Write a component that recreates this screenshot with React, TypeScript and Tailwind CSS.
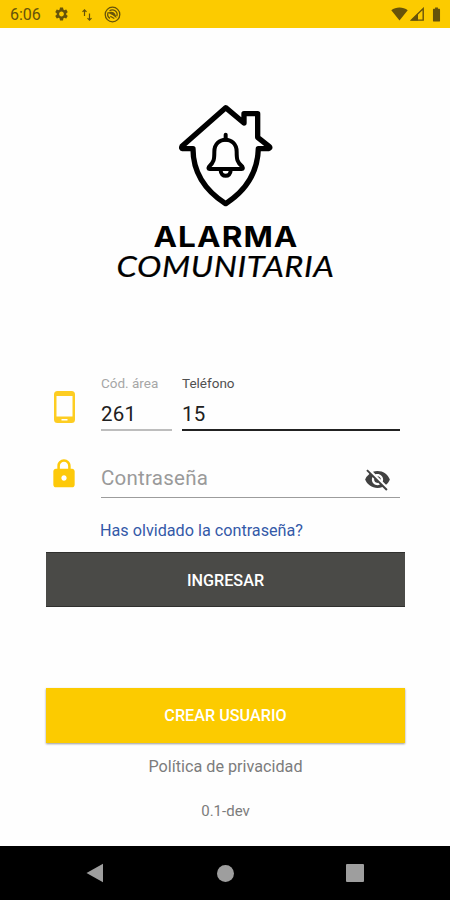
import React from 'react';
import { MdBatteryFull, MdLock, MdSettings, MdVisibilityOff } from 'react-icons/md';

const StatusBar: React.FC = () => (
  <header className="flex h-7 items-center bg-[#fccb00] pl-[10px] pr-[5px] text-[#66530a]">
    <span className="w-[43px] pt-0.5 text-[16px] leading-none">6:06</span>
    <MdSettings className="h-4 w-[17px]" />
    {/* data arrows */}
    <svg className="ml-[11px] mt-0.5 h-[14px] w-3" viewBox="0 0 12 14" fill="none" stroke="currentColor" strokeWidth="1.2">
      <path d="M3.500 8V2M1.500 3.800L3.500 1.800l2 2M8.500 5.500v6.500M6.500 10.200l2 2 2-2" />
    </svg>
    <svg className="ml-[11px] h-[17px] w-[17px]" viewBox="0 0 17 17" fill="none" stroke="currentColor" strokeWidth="1.3">
      <circle cx="8.500" cy="8.500" r="7.300" />
      <path d="M6 12.400A4.700 4.700 0 0 1 4.300 6.300M5.500 4.900a4.700 4.700 0 0 1 7.300 5.300" />
      <path d="M5.300 6.800c3-1.300 5.200.2 6.200 3.700L8.500 8.300z" fill="currentColor" />
      <path d="M6.300 10.300l4 2.200" />
    </svg>
    <div className="ml-auto flex items-center">
      <svg className="h-[14px] w-[17px]" viewBox="0 0 17 14" fill="currentColor">
        <path d="M.3 3.300C4.700-.5 12.300-.5 16.700 3.300L8.500 13.500z" />
      </svg>
      <svg className="ml-[2px] h-[14px] w-[14px]" viewBox="0 0 14 14" fill="none" stroke="currentColor" strokeWidth="1.400">
        <path d="M1.500 13.100L13.200 1.600v11.500z" />
        <path d="M1 13.500L8 6.600v6.900z" fill="currentColor" stroke="none" />
      </svg>
      <MdBatteryFull className="ml-[4px] h-[17px] w-[17px]" />
    </div>
  </header>
);

const Logo: React.FC = () => (
  <div className="flex flex-col items-center text-black">
    <svg
      className="h-[120px] w-[120px]"
      viewBox="0 0 360 360"
      fill="none"
      stroke="currentColor"
      strokeWidth="16"
      strokeLinejoin="round"
      strokeLinecap="round"
    >
      <path d="M182 38L51 154Q48 160 53 161H84C84 229 120 286 182 326C244 286 278 229 280 161H310Q317 159 313 155L278 127V56H237V84Z" />
      <g strokeWidth="12">
        <path d="M182 119V134" />
        <path d="M148 170C148 122 215 122 215 170C215 193 216 202 232 215Q236 222 230 222H134Q128 222 132 215C147 202 148 193 148 170Z" />
        <path d="M167 226C167 248 197 248 197 226" />
      </g>
    </svg>
    <svg className="h-[75px] w-[240px]" viewBox="0 0 240 75" fill="currentColor">
      <text
        x="48.500"
        y="31.500"
        fontFamily="Inter, sans-serif"
        fontSize="29"
        fontWeight="700"
        letterSpacing="1"
        textLength="145"
        lengthAdjust="spacingAndGlyphs"
      >
        ALARMA
      </text>
      <text
        x="11.500"
        y="62"
        fontFamily="Lato, sans-serif"
        fontSize="28"
        fontStyle="italic"
        letterSpacing="0.5"
        stroke="currentColor"
        strokeWidth="0.2"
        textLength="218"
        lengthAdjust="spacingAndGlyphs"
      >
        COMUNITARIA
      </text>
    </svg>
  </div>
);

const LoginForm: React.FC = () => (
  <form className="mt-[85px] flex flex-col">
    <div className="flex h-14 px-[46px]">
      <svg className="ml-2 mt-4 h-8 w-[21px]" viewBox="0 0 21 32">
        <path
          fill="#fdcd22"
          fillRule="evenodd"
          d="M3.500 0h14A3.500 3.500 0 0 1 21 3.500v25a3.500 3.500 0 0 1-3.500 3.500h-14A3.500 3.500 0 0 1 0 28.500v-25A3.500 3.500 0 0 1 3.500 0zM2.500 5v20.500h16V5zM7.500 28v1.500h6v-1.500z"
        />
      </svg>
      <label className="ml-[26px] flex w-[71px] flex-col border-b-2 border-[#bdbdbd] text-[13.500px] leading-4 text-[#a6a6a6]">
        Cód. área
        <input
          className="mt-[10px] w-full bg-transparent p-0 text-[20.500px] leading-[26px] tracking-[0.2px] text-[#202020] outline-none"
          defaultValue="261"
        />
      </label>
      <label className="ml-[10px] flex w-[218px] flex-col border-b-2 border-[#222222] text-[13.500px] leading-4 text-[#505050]">
        Teléfono
        <input
          className="mt-[10px] w-full bg-transparent p-0 text-[20.500px] leading-[26px] tracking-[0.2px] text-[#202020] outline-none"
          defaultValue="15"
        />
      </label>
    </div>

    <div className="mt-[27px] flex h-10 pl-[48px] pr-[50px]">
      <MdLock className="h-8 w-8 shrink-0 text-[#fdc90a]" />
      <div className="ml-[21px] flex min-w-0 flex-1 items-center border-b border-[#9c9c9c]">
        <input
          className="min-w-0 flex-1 bg-transparent p-0 pt-px text-[20.500px] leading-[26px] tracking-[0.25px] outline-none placeholder:text-[#9a9a9a]"
          placeholder="Contraseña"
        />
        <MdVisibilityOff className="mr-[9px] mt-[3px] h-[27px] w-[27px] shrink-0 text-[#414141]" />
      </div>
    </div>

    <a className="ml-[100px] mt-[23px] text-[16.200px] leading-5 text-[#3459a8]">Has olvidado la contraseña?</a>
    <button
      type="button"
      className="ml-[46px] mr-[45px] mt-[11px] h-[55px] border-y border-[#30302e] bg-[#4a4a47] pt-[3px] text-[16.200px] font-medium text-white"
    >
      INGRESAR
    </button>
  </form>
);

const NavBar: React.FC = () => (
  <nav className="flex h-[54px] items-center bg-black px-[86px] text-[#9e9e9e]">
    <svg className="h-5 w-[18px]" viewBox="0 0 18 20" fill="currentColor">
      <path d="M.5 10L17 .8v18.400z" />
    </svg>
    <div className="ml-[113px] h-[17px] w-[17px] rounded-full bg-[#9e9e9e]" />
    <div className="ml-[112px] h-[18px] w-[18px] shrink-0 rounded-[1px] bg-[#9e9e9e]" />
  </nav>
);

const App: React.FC = () => {
  return (
    <div className="flex h-[900px] w-[450px] flex-col overflow-hidden bg-[#fefefe] font-[Roboto,sans-serif]">
      <StatusBar />
      <main className="flex flex-1 flex-col pt-[67px]">
        <Logo />
        <LoginForm />
        <button
          type="button"
          className="ml-[46px] mr-[45px] mt-[81px] h-[55px] bg-[#fccb00] pt-px text-[16.200px] font-medium text-white shadow-[0_1px_2px_rgba(0,0,0,0.4)]"
        >
          CREAR USUARIO
        </button>
        <p className="mt-[14px] pl-px text-center text-[16.200px] leading-5 text-[#7c7c7c]">Política de privacidad</p>
        <p className="mt-[24px] pl-px text-center text-[15px] leading-5 text-[#7c7c7c]">0.1-dev</p>
      </main>
      <NavBar />
    </div>
  );
};

export default App;
